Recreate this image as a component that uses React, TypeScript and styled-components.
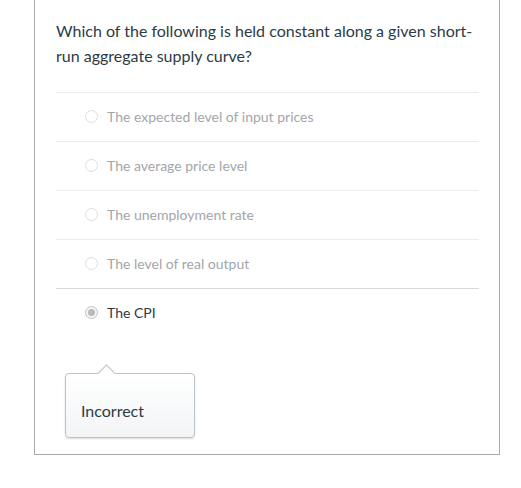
import React from "react";
import styled, { createGlobalStyle } from "styled-components";

const Global = createGlobalStyle`
  html, body { margin: 0; padding: 0; background: #ffffff; }
  body { font-family: Lato, "Open Sans", "Liberation Sans", sans-serif; }
`;

const Card = styled.div`
  margin-left: 34px;
  width: 466px;
  box-sizing: border-box;
  border: 1px solid #a9a9a9;
  border-top: none;
  padding: 18px 20px 16px 21px;
  background: #fff;
`;

const Question = styled.p`
  margin: 0 0 24px 0;
  font-size: 16px;
  line-height: 25px;
  color: #2d3b45;
`;

const OptionList = styled.div`
  display: flex;
  flex-direction: column;
`;

const Row = styled.label<{ $strong?: boolean }>`
  display: flex;
  align-items: center;
  gap: 9px;
  height: 49px;
  box-sizing: border-box;
  padding: 0 0 2px 29px;
  border-top: 1px solid ${(p) => (p.$strong ? "#d8d8d8" : "#ebebeb")};
  font-size: 14px;
  color: ${(p) => (p.$strong ? "#2d3b45" : "#a3a6a9")};
`;

const Radio = styled.span<{ $checked?: boolean }>`
  position: relative;
  width: 13px;
  height: 13px;
  box-sizing: border-box;
  border-radius: 50%;
  border: 1px solid ${(p) => (p.$checked ? "#c4c4c4" : "#dedede")};
  background: ${(p) => (p.$checked ? "#f4f4f4" : "#fff")};
  flex: none;
  &::after {
    content: "";
    display: ${(p) => (p.$checked ? "block" : "none")};
    position: absolute;
    left: 2px;
    top: 2px;
    width: 7px;
    height: 7px;
    border-radius: 50%;
    background: #b9b9b9;
  }
`;

const Tip = styled.div`
  position: relative;
  margin: 36px 0 0 9px;
  width: 130px;
  box-sizing: border-box;
  padding: 25px 14px 14px 15px;
  border: 1px solid #bcc4cb;
  border-radius: 4px;
  background: linear-gradient(#ffffff, #f2f4f6);
  box-shadow: 0 1px 2px rgba(0, 0, 0, 0.15);
  font-size: 16px;
  line-height: 24px;
  color: #2d3b45;
  &::before {
    content: "";
    position: absolute;
    top: -7px;
    left: 34px;
    width: 12px;
    height: 12px;
    background: #fff;
    border-left: 1px solid #bcc4cb;
    border-top: 1px solid #bcc4cb;
    transform: rotate(45deg);
  }
`;

const options = [
  "The expected level of input prices",
  "The average price level",
  "The unemployment rate",
  "The level of real output",
  "The CPI",
];

export default function App() {
  return (
    <>
      <Global />
      <Card>
        <Question>
          Which of the following is held constant along a given short-run aggregate supply curve?
        </Question>
        <OptionList>
          {options.map((o, i) => {
            const sel = i === options.length - 1;
            return (
              <Row key={o} $strong={sel}>
                <Radio $checked={sel} />
                {o}
              </Row>
            );
          })}
        </OptionList>
        <Tip>Incorrect</Tip>
      </Card>
    </>
  );
}
